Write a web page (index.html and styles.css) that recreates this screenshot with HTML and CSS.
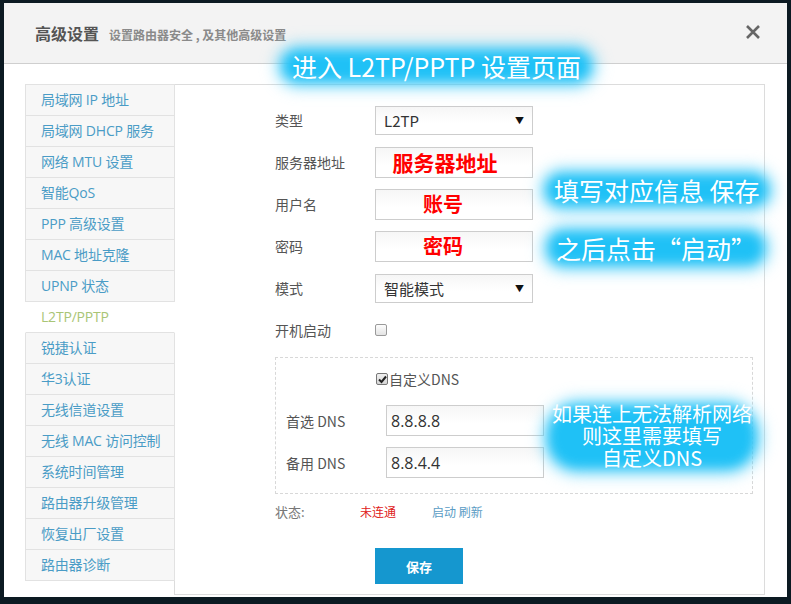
FILE: index.html
```html
<!DOCTYPE html>
<html lang="zh-CN">
<head>
<meta charset="utf-8">
<title>高级设置</title>
<link rel="stylesheet" href="styles.css">
</head>
<body>
<div class="modal">
  <div class="modal-header">
    <h1 class="title">高级设置</h1>
    <span class="subtitle">设置路由器安全 , 及其他高级设置</span>
    <span class="close">
      <svg width="16" height="16" viewBox="0 0 16 16"><path d="M2 2 L14 14 M14 2 L2 14" stroke="#666" stroke-width="2.6" stroke-linecap="butt"/></svg>
    </span>
  </div>
  <div class="modal-body">
    <ul class="sidenav">
      <li>局域网 IP 地址</li>
      <li>局域网 DHCP 服务</li>
      <li>网络 MTU 设置</li>
      <li>智能QoS</li>
      <li>PPP 高级设置</li>
      <li>MAC 地址克隆</li>
      <li>UPNP 状态</li>
      <li class="active">L2TP/PPTP</li>
      <li>锐捷认证</li>
      <li>华3认证</li>
      <li>无线信道设置</li>
      <li>无线 MAC 访问控制</li>
      <li>系统时间管理</li>
      <li>路由器升级管理</li>
      <li>恢复出厂设置</li>
      <li>路由器诊断</li>
    </ul>
    <div class="panel">
      <div class="form">
        <div class="row">
          <span class="label">类型</span>
          <div class="select"><span>L2TP</span><span class="caret">▼</span></div>
        </div>
        <div class="row">
          <span class="label">服务器地址</span>
          <div class="input"><span class="red red-server">服务器地址</span></div>
        </div>
        <div class="row">
          <span class="label">用户名</span>
          <div class="input"><span class="red red-short">账号</span></div>
        </div>
        <div class="row">
          <span class="label">密码</span>
          <div class="input"><span class="red red-short">密码</span></div>
        </div>
        <div class="row">
          <span class="label">模式</span>
          <div class="select"><span>智能模式</span><span class="caret">▼</span></div>
        </div>
        <div class="row">
          <span class="label">开机启动</span>
          <span class="checkbox"></span>
        </div>
        <div class="dns-box">
          <div class="dns-check"><span class="checkbox checked">
            <svg width="9" height="9" viewBox="0 0 9 9"><path d="M1 4.5 L3.5 7 L8 1.5" stroke="#222" stroke-width="2" fill="none"/></svg>
          </span><span>自定义DNS</span></div>
          <div class="dns-row">
            <span class="label">首选 DNS</span>
            <div class="input value">8.8.8.8</div>
          </div>
          <div class="dns-row">
            <span class="label">备用 DNS</span>
            <div class="input value">8.8.4.4</div>
          </div>
        </div>
        <div class="status">
          <span class="status-label">状态:</span>
          <span class="status-val">未连通</span>
          <span class="status-links">启动 刷新</span>
        </div>
        <div class="actions"><span class="btn">保存</span></div>
      </div>
    </div>
  </div>

  <div class="note note-top"><span>进入 L2TP/PPTP 设置页面</span></div>
  <div class="note note-fill"><span>填写对应信息 保存</span></div>
  <div class="note note-start"><span>之后点击“启动”</span></div>
  <div class="note note-dns">
    <span class="line">如果连上无法解析网络</span>
    <span class="line">则这里需要填写</span>
    <span class="line">自定义DNS</span>
  </div>
</div>
</body>
</html>
```

FILE: styles.css
```css
* { box-sizing: border-box; }
html, body {
  margin: 0;
  padding: 0;
  background: #0c1a22;
  width: 791px;
  height: 604px;
  overflow: hidden;
  font-family: "Open Sans", "Noto Sans CJK SC", sans-serif;
}
.modal {
  position: relative;
  margin: 3px 0 0 4px;
  width: 783px;
  height: 594px;
  background: #fff;
}
.modal-header {
  height: 61px;
  background: #f3f3f3;
  border-bottom: 1px solid #cfcfcf;
  display: flex;
  align-items: center;
  padding: 0 0 0 31px;
  position: relative;
}
.title {
  margin: 0;
  font-family: "Noto Sans CJK SC", sans-serif;
  font-size: 16px;
  font-weight: 700;
  color: #555;
}
.subtitle {
  margin-left: 10px;
  margin-top: 2px;
  font-family: "Noto Sans CJK SC", sans-serif;
  font-size: 12px;
  font-weight: 700;
  color: #8a8a8a;
}
.close {
  position: absolute;
  right: 26px;
  top: 21px;
  width: 16px;
  height: 16px;
  display: block;
}
.close svg { display: block; }
.modal-body {
  display: flex;
  padding: 20px 22px 0 21px;
}
.sidenav {
  list-style: none;
  margin: 0;
  padding: 0;
  width: 150px;
  border-top: 1px solid #e2e2e2;
  flex-shrink: 0;
  align-self: flex-start;
  position: relative;
  z-index: 1;
}
.sidenav li {
  height: 31px;
  line-height: 30px;
  padding-left: 15px;
  font-family: "Open Sans", "Noto Sans CJK SC", sans-serif;
  font-size: 14px;
  color: #4a9cc6;
  background: #f7f7f7;
  border-left: 1px solid #e2e2e2;
  border-right: 1px solid #e2e2e2;
  border-bottom: 1px solid #e2e2e2;
  white-space: nowrap;
  letter-spacing: -0.2px;
}
.sidenav li.active {
  background: #fff;
  color: #a9c576;
  border-right-color: #fff;
  border-left-color: #fff;
}
.panel {
  flex: 1;
  margin-left: -1px;
  height: 511px;
  border: 1px solid #dcdcdc;
}
.form {
  padding: 20px 0 0 100px;
  font-family: "Noto Sans CJK SC", sans-serif;
}
.row {
  display: flex;
  align-items: center;
  height: 30px;
  margin-bottom: 12px;
}
.label {
  width: 100px;
  font-size: 14px;
  color: #555;
}
.select, .input {
  width: 158px;
  height: 30px;
  border: 1px solid #cdcdcd;
  background: linear-gradient(#f6f6f6, #fff 60%);
  display: flex;
  align-items: center;
}
.select {
  justify-content: space-between;
  padding: 0 8px 0 8px;
  font-size: 15px;
  color: #333;
  height: 29px;
}
.caret {
  font-size: 9px;
  color: #111;
}
.input {
  justify-content: center;
  height: 31px;
}
.red {
  color: #f00;
  font-weight: 700;
  font-size: 20px;
  line-height: 1;
}
.red-server { font-size: 21px; margin-left: -18px; }
.red-short { margin-left: -22px; }
.checkbox {
  width: 12px;
  height: 12px;
  border: 1px solid #9a9a9a;
  border-radius: 2px;
  background: linear-gradient(#fdfdfd, #e3e3e3);
  display: inline-flex;
  align-items: center;
  justify-content: center;
}
.checkbox.checked {
  border-color: #777;
  background: linear-gradient(#f0f0f0, #d6d6d6);
}
.checkbox svg { display: block; }
.dns-box {
  width: 478px;
  border: 1px dashed #d8d8d8;
  padding: 10px 0 15px 10px;
}
.dns-check {
  height: 22px;
  display: flex;
  align-items: center;
  padding-left: 90px;
  font-size: 14px;
  color: #555;
  margin-bottom: 15px;
}
.dns-check .checkbox { margin-right: 1px; }
.dns-row {
  display: flex;
  align-items: center;
  margin-bottom: 11px;
}
.dns-row:last-child { margin-bottom: 0; }
.input.value {
  justify-content: flex-start;
  padding-left: 4px;
  font-family: "Open Sans", "Noto Sans CJK SC", sans-serif;
  font-size: 16px;
  color: #333;
}
.status {
  display: flex;
  align-items: center;
  height: 20px;
  margin-top: 7px;
  font-size: 12px;
}
.status-label { width: 85px; color: #777; font-size: 13px; }
.status-val { width: 72px; color: #e02020; }
.status-links { color: #5a9cc4; }
.actions {
  margin-top: 27px;
  padding-left: 100px;
}
.btn {
  display: inline-flex;
  align-items: center;
  justify-content: center;
  width: 88px;
  height: 36px;
  background: #1597cf;
  color: #fff;
  font-weight: 700;
  font-size: 13px;
}

/* glowing annotations over the page */
.note {
  position: absolute;
  z-index: 5;
  color: #fff;
  font-family: "Noto Sans CJK SC", sans-serif;
  text-align: center;
  white-space: nowrap;
}
.note::before {
  content: "";
  position: absolute;
  inset: 3px -2px;
  background: #1fc1f6;
  border-radius: 16px;
  box-shadow: 0 0 10px 6px rgba(90, 210, 250, 0.7);
  filter: blur(6px);
  z-index: -1;
}
.note span { position: relative; }
.note-top {
  left: 280px;
  top: 44px;
  font-size: 25px;
  line-height: 38px;
  padding: 0 8px;
}
.note-fill {
  left: 544px;
  top: 168px;
  font-size: 25px;
  line-height: 38px;
  padding: 0 6px;
}
.note-start {
  left: 546px;
  top: 225px;
  font-size: 25px;
  line-height: 40px;
  padding: 0 6px;
}
.note-dns {
  left: 542px;
  top: 394px;
  font-size: 20px;
  padding: 6px 6px 8px;
  display: flex;
  flex-direction: column;
  align-items: center;
}
.note-dns .line {
  display: block;
  height: 22px;
  line-height: 22px;
}
.note-dns::before { border-radius: 30px; inset: 8px 2px; }
```
